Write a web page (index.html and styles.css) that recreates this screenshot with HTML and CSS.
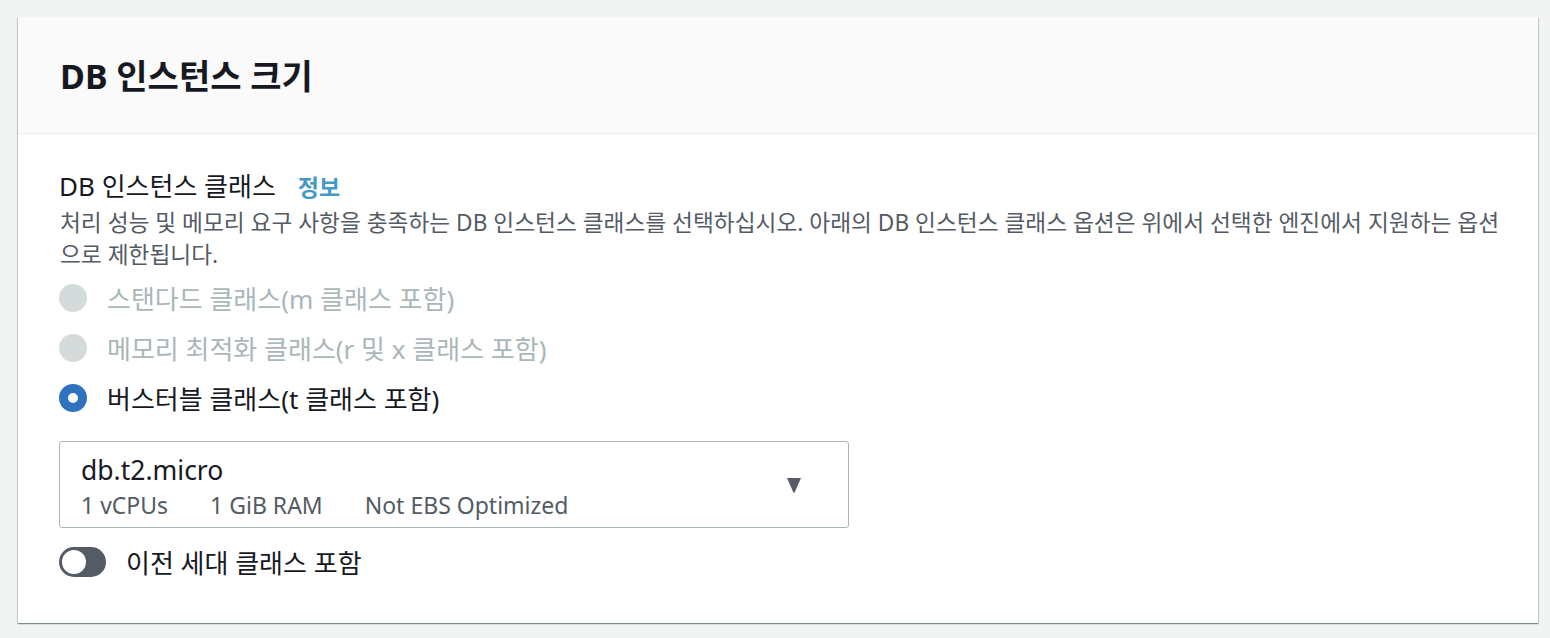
FILE: index.html
```html
<!DOCTYPE html>
<html lang="ko">
<head>
<meta charset="utf-8">
<link rel="stylesheet" href="styles.css">
</head>
<body>
<div class="page">
  <section class="card">
    <header class="card-header">
      <h2 class="title">DB 인스턴스 크기</h2>
    </header>
    <div class="card-body">
      <div class="label-row">
        <span class="label">DB 인스턴스 클래스</span>
        <a class="info">정보</a>
      </div>
      <p class="desc">처리 성능 및 메모리 요구 사항을 충족하는 DB 인스턴스 클래스를 선택하십시오. 아래의 DB 인스턴스 클래스 옵션은 위에서 선택한 엔진에서 지원하는 옵션으로 제한됩니다.</p>
      <div class="radios">
        <div class="radio disabled"><span class="dot"></span><span class="rtext">스탠다드 클래스(m 클래스 포함)</span></div>
        <div class="radio disabled"><span class="dot"></span><span class="rtext">메모리 최적화 클래스(r 및 x 클래스 포함)</span></div>
        <div class="radio checked"><span class="dot"></span><span class="rtext">버스터블 클래스(t 클래스 포함)</span></div>
      </div>
      <div class="select">
        <div class="select-text">
          <div class="select-main">db.t2.micro</div>
          <div class="select-sub"><span>1 vCPUs</span><span>1 GiB RAM</span><span>Not EBS Optimized</span></div>
        </div>
        <svg class="caret" width="14" height="15" viewBox="0 0 14 15"><path d="M0 0 H14 L7.7 14.2 Q7 15.2 6.3 14.2 Z" fill="#545b64"/></svg>
      </div>
      <div class="toggle-row">
        <span class="toggle"><span class="knob"></span></span>
        <span class="ttext">이전 세대 클래스 포함</span>
      </div>
    </div>
  </section>
</div>
</body>
</html>
```

FILE: styles.css
```css
html, body {
  margin: 0;
  padding: 0;
  background: #f2f3f3;
}
body {
  font-family: "Noto Sans", "Noto Sans CJK KR", sans-serif;
  color: #16191f;
}
.page {
  padding: 17px 12px 15px 18px;
}
.card {
  background: #fff;
  box-shadow: 0 1px 1px 0 rgba(0,28,36,.3), 1px 1px 1px 0 rgba(0,28,36,.15), -1px 1px 1px 0 rgba(0,28,36,.15);
}
.card-header {
  background: #fafafa;
  border-bottom: 1px solid #eaeded;
  height: 116px;
  display: flex;
  align-items: center;
  padding-left: 42px;
}
.title {
  margin: 0;
  font-size: 34px;
  font-weight: 700;
  line-height: 40px;
  padding-top: 2px;
}
.card-body {
  padding: 37px 20px 46px 41px;
}
.label-row {
  display: flex;
  align-items: baseline;
  gap: 22px;
  line-height: 30px;
}
.label {
  font-size: 26px;
}
.info {
  font-size: 23px;
  font-weight: 700;
  color: #4599c6;
}
.desc {
  margin: 5px 0 0;
  font-size: 22.7px;
  line-height: 32px;
  color: #545b64;
  padding-left: 1px;
  word-break: break-all;
}
.radios {
  margin-top: 12px;
  display: flex;
  flex-direction: column;
  gap: 20px;
}
.radio {
  display: flex;
  align-items: center;
  gap: 20px;
  height: 30px;
  font-size: 26px;
}
.dot {
  width: 28px;
  height: 28px;
  border-radius: 50%;
  box-sizing: border-box;
  flex: none;
}
.radio.disabled .dot {
  background: #d5dbdb;
}
.radio.disabled .rtext {
  color: #aab7b8;
}
.radio.checked .dot {
  background: #fff;
  border: 9px solid #2f72bf;
}
.select {
  margin-top: 28px;
  width: 790px;
  height: 87px;
  box-sizing: border-box;
  border: 1px solid #aab7b8;
  border-radius: 3px;
  display: flex;
  align-items: center;
  justify-content: space-between;
  padding: 0 47px 0 21px;
}
.select-text {
  align-self: flex-start;
  padding-top: 11px;
}
.select-main {
  font-size: 26.5px;
  line-height: 34px;
}
.select-sub {
  display: flex;
  gap: 42px;
  font-size: 23px;
  line-height: 36px;
  color: #545b64;
}
.caret {
  margin-top: 2px;
}
.toggle-row {
  margin-top: 19px;
  display: flex;
  align-items: center;
  gap: 20px;
  height: 30px;
}
.toggle {
  width: 47px;
  height: 30px;
  border-radius: 15px;
  background: #545b64;
  display: flex;
  align-items: center;
  padding-left: 3px;
  box-sizing: border-box;
  flex: none;
}
.knob {
  width: 24px;
  height: 24px;
  border-radius: 50%;
  background: #fff;
}
.ttext {
  font-size: 26px;
}
```
